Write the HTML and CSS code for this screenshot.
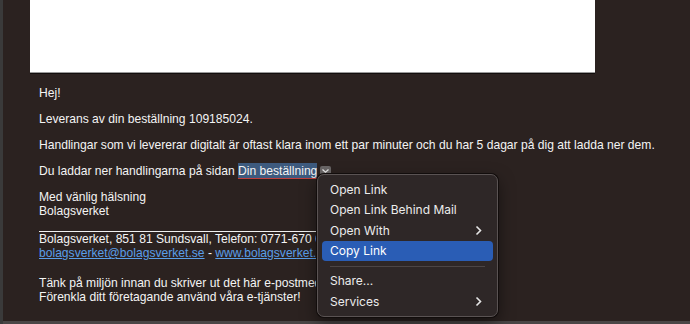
FILE: index.html
```html
<!DOCTYPE html>
<html>
<head>
<meta charset="utf-8">
<link rel="stylesheet" href="styles.css">
</head>
<body>
<div class="window">
  <div class="mail">
    <div class="banner"></div>
    <div class="body">
      <p>Hej!</p>
      <p>Leverans av din beställning 109185024.</p>
      <p>Handlingar som vi levererar digitalt är oftast klara inom ett par minuter och du har 5 dagar på dig att ladda ner dem.</p>
      <p>Du laddar ner handlingarna på sidan <span class="sel">Din beställning</span><span class="drop"><svg width="9" height="6" viewBox="0 0 9 6"><path d="M1.5 1.5 L4.5 4.2 L7.5 1.5" fill="none" stroke="#e8e8e8" stroke-width="1.3"/></svg></span></p>
      <p>Med vänlig hälsning<br>Bolagsverket</p>
      <div class="footer">
        <div>Bolagsverket, 851 81 Sundsvall, Telefon: 0771-670 670</div>
        <div><a>bolagsverket@bolagsverket.se</a> - <a>www.bolagsverket.se</a></div>
      </div>
      <p class="last">Tänk på miljön innan du skriver ut det här e-postmeddelandet.<br>Förenkla ditt företagande använd våra e-tjänster!</p>
    </div>
  </div>
  <div class="bottom"></div>
  <div class="menu">
    <div class="item">Open Link</div>
    <div class="item">Open Link Behind Mail</div>
    <div class="item sub">Open With<svg class="chev" width="7" height="11" viewBox="0 0 7 11"><path d="M1.5 1.5 L5.5 5.5 L1.5 9.5" fill="none" stroke="#e6e6e6" stroke-width="1.6"/></svg></div>
    <div class="item active">Copy Link</div>
    <div class="sep"></div>
    <div class="item">Share...</div>
    <div class="item sub">Services<svg class="chev" width="7" height="11" viewBox="0 0 7 11"><path d="M1.5 1.5 L5.5 5.5 L1.5 9.5" fill="none" stroke="#e6e6e6" stroke-width="1.6"/></svg></div>
  </div>
</div>
</body>
</html>
```
FILE: styles.css
```css
html, body {
  margin: 0;
  padding: 0;
  width: 690px;
  height: 324px;
  overflow: hidden;
  background: #2b2220;
}
.window {
  position: relative;
  width: 690px;
  height: 324px;
  display: flex;
  flex-direction: column;
  border-left: 3px solid #3a3a3a;
  box-sizing: border-box;
  font-family: "Liberation Sans", Arial, sans-serif;
  font-size: 12.1px;
  color: #f4f4f4;
}
.mail {
  flex: 1;
  padding-left: 27px;
  overflow: hidden;
}
.banner {
  width: 565px;
  height: 72px;
  background: #ffffff;
  border-bottom: 1px solid #9a9a9a;
  box-shadow: 0 1px 0 #120e0d;
}
.body {
  padding-left: 9px;
  padding-top: 13px;
}
.body p {
  margin: 0 0 12px 0;
  line-height: 14px;
  white-space: nowrap;
}
.sel {
  background: #3d5a7e;
  border-bottom: 1px solid #c0403e;
  padding: 1px 0 0 0;
}
.drop {
  display: inline-flex;
  align-items: center;
  justify-content: center;
  width: 11px;
  height: 10px;
  margin-left: 3px;
  background: #6a6666;
  border-radius: 2px;
  vertical-align: 1px;
}
.footer {
  width: 277px;
  border-top: 1px solid #f0f0f0;
  margin-top: 13px;
  line-height: 14px;
  white-space: nowrap;
  margin-bottom: 16px;
}
.footer a {
  color: #5a9ee8;
  text-decoration: underline;
}
.bottom {
  height: 3px;
  background: #4a4646;
}
.menu {
  position: absolute;
  left: 314px;
  top: 174px;
  width: 181px;
  padding: 5px 4px 4px;
  box-sizing: border-box;
  background: #2e2727;
  border: 1px solid #5a5353;
  border-radius: 7px;
  box-shadow: 0 0 0 1px #120d0c, 0 6px 16px rgba(0,0,0,0.5);
  font-family: "Inter", "Noto Sans", sans-serif;
  font-size: 12px;
  color: #ececec;
  display: flex;
  flex-direction: column;
}
.item {
  height: 20.3px;
  line-height: 20px;
  padding: 0 8px;
  border-radius: 4px;
  display: flex;
  align-items: center;
  justify-content: space-between;
}
.item.active {
  background: #2a5db5;
  color: #ffffff;
}
.chev {
  margin-right: 3px;
}
.sep {
  height: 1px;
  background: #4c4545;
  margin: 5px 8px 4px;
}
```
